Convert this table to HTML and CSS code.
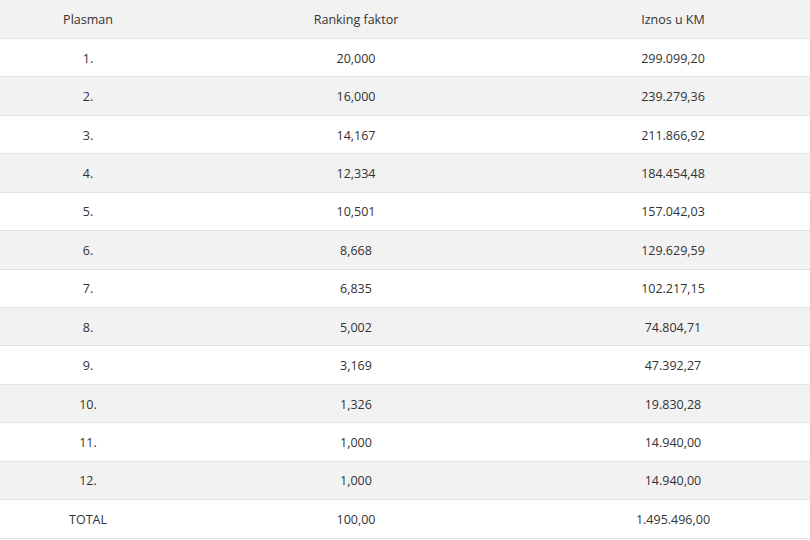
FILE: index.html
```html
<!DOCTYPE html>
<html lang="bs">
<head>
<meta charset="utf-8">
<title>Plasman</title>
<link rel="stylesheet" href="styles.css">
</head>
<body>
<table class="prize">
  <thead>
    <tr><th class="c1">Plasman</th><th class="c2">Ranking faktor</th><th class="c3">Iznos u KM</th></tr>
  </thead>
  <tbody>
    <tr><td>1.</td><td>20,000</td><td>299.099,20</td></tr>
    <tr><td>2.</td><td>16,000</td><td>239.279,36</td></tr>
    <tr><td>3.</td><td>14,167</td><td>211.866,92</td></tr>
    <tr><td>4.</td><td>12,334</td><td>184.454,48</td></tr>
    <tr><td>5.</td><td>10,501</td><td>157.042,03</td></tr>
    <tr><td>6.</td><td>8,668</td><td>129.629,59</td></tr>
    <tr><td>7.</td><td>6,835</td><td>102.217,15</td></tr>
    <tr><td>8.</td><td>5,002</td><td>74.804,71</td></tr>
    <tr><td>9.</td><td>3,169</td><td>47.392,27</td></tr>
    <tr><td>10.</td><td>1,326</td><td>19.830,28</td></tr>
    <tr><td>11.</td><td>1,000</td><td>14.940,00</td></tr>
    <tr><td>12.</td><td>1,000</td><td>14.940,00</td></tr>
    <tr><td>TOTAL</td><td>100,00</td><td>1.495.496,00</td></tr>
  </tbody>
</table>
</body>
</html>
```
FILE: styles.css
```css
html, body {
  margin: 0;
  padding: 0;
  background: #ffffff;
}
.prize {
  width: 810px;
  border-collapse: collapse;
  table-layout: fixed;
  font-family: "Open Sans", "Liberation Sans", sans-serif;
  font-size: 12.5px;
  color: #333333;
}
.prize .c1 { width: 176px; }
.prize .c2 { width: 360px; }
.prize .c3 { width: 274px; }
.prize th,
.prize td {
  height: 38.45px;
  box-sizing: border-box;
  padding: 1px 8px 0;
  text-align: center;
  vertical-align: middle;
  font-weight: 400;
  border-bottom: 1px solid #e2e2e2;
}
.prize thead tr,
.prize tbody tr:nth-child(even) {
  background: #f2f2f2;
}
```
